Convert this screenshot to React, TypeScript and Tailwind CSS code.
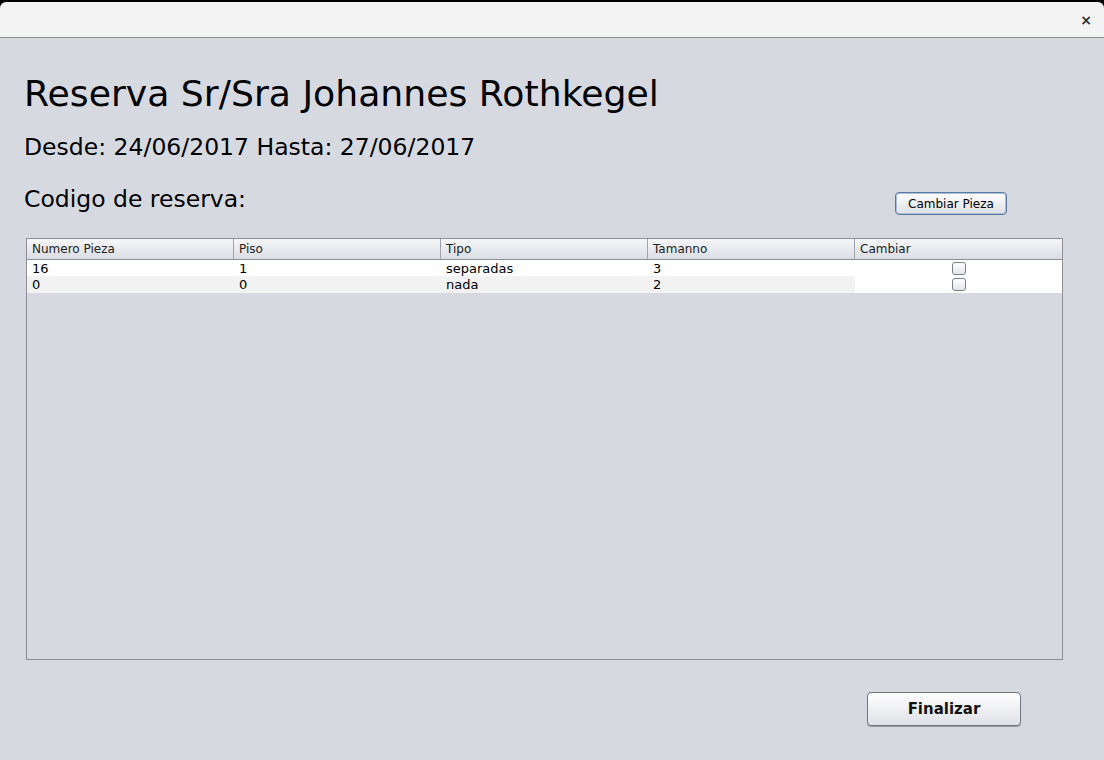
import { FC } from "react";

const rows = [
  { num: "16", piso: "1", tipo: "separadas", tam: "3" },
  { num: "0", piso: "0", tipo: "nada", tam: "2" },
];

const headers = ["Numero Pieza", "Piso", "Tipo", "Tamanno", "Cambiar"];

const Check: FC = () => (
  <span className="block w-[14px] h-[13px] rounded-[3px] border border-[#7a7f88] bg-gradient-to-b from-white to-[#e4e6ea]"></span>
);

export default function App() {
  return (
    <div
      className="w-[1104px] h-[760px] bg-black flex flex-col overflow-hidden"
      style={{ fontFamily: '"DejaVu Sans", sans-serif' }}
    >
      {/* title bar */}
      <div className="mt-[2px] h-[36px] bg-[#f3f3f3] rounded-t-[6px] border-b border-[#8c8c8c] flex items-center justify-end pr-[12px] shrink-0">
        <span className="text-[14px] font-bold text-[#2e3436] leading-none">×</span>
      </div>

      <div className="flex-1 bg-[#d6d9e0] flex flex-col px-[24px] pt-[34px]">
        <h1 className="text-[36.2px] leading-[44px] text-black">Reserva Sr/Sra Johannes Rothkegel</h1>
        <p className="mt-[16px] text-[23.5px] leading-[30px] text-black">Desde: 24/06/2017 Hasta: 27/06/2017</p>

        <div className="mt-[22px] flex items-start justify-between">
          <p className="text-[23.5px] leading-[30px] text-black">Codigo de reserva:</p>
          <button className="mt-[8px] mr-[73px] w-[112px] h-[23px] rounded-[4px] border border-[#5a7aa0] bg-gradient-to-b from-white to-[#dde0e6] text-[12px] text-black shadow-[inset_0_0_0_1px_#a9c0dc]">
            Cambiar Pieza
          </button>
        </div>

        {/* table */}
        <div className="mt-[23px] ml-[2px] w-[1037px] h-[422px] border border-[#8c8f96] bg-[#d6d9e0] flex flex-col">
          <div className="grid grid-cols-5 h-[21px] bg-gradient-to-b from-[#f6f7f9] to-[#dadde3] border-b border-[#8c8f96]">
            {headers.map((h, i) => (
              <div
                key={h}
                className={`text-[12px] leading-[20px] px-[5px] text-[#222] ${i < 4 ? "border-r border-[#9fa3ab]" : ""}`}
              >
                {h}
              </div>
            ))}
          </div>
          {rows.map((r, i) => (
            <div key={i} className="grid grid-cols-5 h-[16px] text-[13px] leading-[17px] text-black">
              <div className={`px-[5px] ${i === 1 ? "bg-[#f2f2f2]" : "bg-white"}`}>{r.num}</div>
              <div className={`px-[5px] ${i === 1 ? "bg-[#f2f2f2]" : "bg-white"}`}>{r.piso}</div>
              <div className={`px-[5px] ${i === 1 ? "bg-[#f2f2f2]" : "bg-white"}`}>{r.tipo}</div>
              <div className={`px-[5px] ${i === 1 ? "bg-[#f2f2f2]" : "bg-white"}`}>{r.tam}</div>
              <div className="bg-white flex items-center justify-center">
                <Check />
              </div>
            </div>
          ))}
        </div>

        <div className="flex justify-end mt-[32px] pr-[59px]">
          <button className="w-[154px] h-[34px] rounded-[4px] border border-[#6f737a] bg-gradient-to-b from-white to-[#dfe1e6] text-[15px] font-bold text-[#111] shadow-[0_1px_0_#9a9ea6]">
            Finalizar
          </button>
        </div>
      </div>
    </div>
  );
}
